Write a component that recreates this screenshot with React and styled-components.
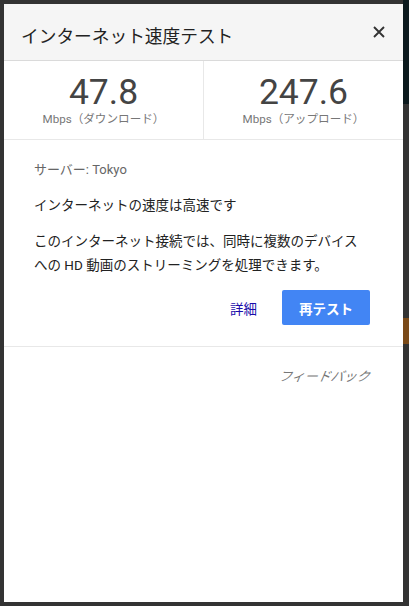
import styled, { createGlobalStyle } from 'styled-components'

const GlobalStyle = createGlobalStyle`
    html, body {
        margin: 0;
        padding: 0;
        background: #333333;
    }
    body {
        font-family: Roboto, "Noto Sans CJK JP", sans-serif;
    }
`

const Backdrop = styled.div`
    width: 409px;
    height: 606px;
    padding: 4px 6px 4px 4px;
    box-sizing: border-box;
    background:
        linear-gradient(#0c1a1e, #0c1a1e) right top / 6px 104px no-repeat,
        linear-gradient(#7a4a18, #7a4a18) right 318px / 6px 26px no-repeat,
        #333333;
`

const Panel = styled.div`
    height: 100%;
    background: #ffffff;
    display: flex;
    flex-direction: column;
`

const Header = styled.div`
    height: 56px;
    background: #f5f5f5;
    border-bottom: 1px solid #dadada;
    display: flex;
    justify-content: space-between;
    align-items: flex-start;
    padding: 0 18px 0 17px;
`

const Title = styled.h1`
    margin: 21px 0 0;
    font-size: 17.7px;
    line-height: 20px;
    font-weight: 400;
    color: #222222;
    font-family: "Noto Sans CJK JP", sans-serif;
`

const CloseButton = styled.button`
    margin-top: 22px;
    width: 12px;
    height: 12px;
    padding: 0;
    border: none;
    background: none;
    cursor: pointer;
    display: flex;
`

const Stats = styled.div`
    display: grid;
    grid-template-columns: 200px 1fr;
    border-bottom: 1px solid #e8e8e8;
`

const StatCell = styled.div`
    display: flex;
    flex-direction: column;
    align-items: center;
    padding: 16px 0 13px;
    border-right: ${p => (p.$divider ? '1px solid #e8e8e8' : 'none')};
`

const StatValue = styled.div`
    font-family: Roboto, sans-serif;
    font-size: 35.5px;
    line-height: 31px;
    color: #444444;
`

const StatLabel = styled.div`
    margin-top: 4px;
    font-size: 11.6px;
    line-height: 14px;
    color: #777777;
`

const Body = styled.div`
    padding: 20px 33px 21px 30px;
    display: flex;
    flex-direction: column;
    border-bottom: 1px solid #e8e8e8;
`

const Server = styled.div`
    font-size: 13px;
    line-height: 20px;
    color: #666666;
`

const Verdict = styled.div`
    margin-top: 15px;
    font-size: 13.5px;
    line-height: 20px;
    color: #222222;
`

const Detail = styled.p`
    margin: 14px 0 0;
    font-size: 13.5px;
    line-height: 24px;
    color: #222222;
`

const Actions = styled.div`
    margin-top: 13px;
    display: flex;
    justify-content: flex-end;
    align-items: center;
    gap: 25px;
`

const LinkButton = styled.button`
    border: none;
    background: none;
    padding: 0;
    font-family: inherit;
    font-size: 13.5px;
    color: #1a0dab;
    cursor: pointer;
`

const PrimaryButton = styled.button`
    width: 88px;
    height: 35px;
    border: none;
    border-radius: 2px;
    background: #4285f4;
    color: #ffffff;
    font-family: inherit;
    font-size: 13.5px;
    font-weight: 700;
    cursor: pointer;
`

const Footer = styled.div`
    padding: 20px 33px 0 30px;
    display: flex;
    justify-content: flex-end;
`

const Feedback = styled.a`
    font-size: 13px;
    line-height: 20px;
    font-style: italic;
    transform: skewX(-10deg);
    color: #777777;
    cursor: pointer;
`

export default function App() {
    return (
        <>
            <GlobalStyle />
            <Backdrop>
                <Panel>
                    <Header>
                        <Title>インターネット速度テスト</Title>
                        <CloseButton aria-label='閉じる'>
                            <svg width='12' height='12' viewBox='0 0 12 12'>
                                <path d='M1 1L11 11M11 1L1 11' stroke='#333' strokeWidth='1.9' />
                            </svg>
                        </CloseButton>
                    </Header>
                    <Stats>
                        <StatCell $divider>
                            <StatValue>47.8</StatValue>
                            <StatLabel>Mbps（ダウンロード）</StatLabel>
                        </StatCell>
                        <StatCell>
                            <StatValue>247.6</StatValue>
                            <StatLabel>Mbps（アップロード）</StatLabel>
                        </StatCell>
                    </Stats>
                    <Body>
                        <Server>サーバー: Tokyo</Server>
                        <Verdict>インターネットの速度は高速です</Verdict>
                        <Detail>
                            このインターネット接続では、同時に複数のデバイス<br />
                            への HD 動画のストリーミングを処理できます。
                        </Detail>
                        <Actions>
                            <LinkButton>詳細</LinkButton>
                            <PrimaryButton>再テスト</PrimaryButton>
                        </Actions>
                    </Body>
                    <Footer>
                        <Feedback>フィードバック</Feedback>
                    </Footer>
                </Panel>
            </Backdrop>
        </>
    )
}
